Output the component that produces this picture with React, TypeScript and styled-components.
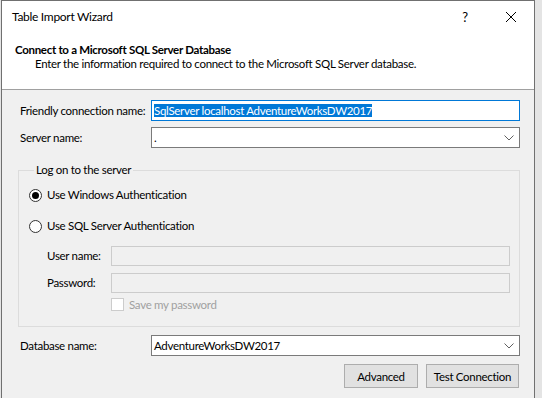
import React from 'react';
import styled, { createGlobalStyle } from 'styled-components';

const GlobalStyle = createGlobalStyle`
  html, body {
    margin: 0;
    padding: 0;
    background: #e4e4e4;
  }
  body {
    font-family: Lato, 'Liberation Sans', sans-serif;
    font-size: 11.5px;
    letter-spacing: -0.3px;
    color: #000;
  }
`;

const Window = styled.div`
  box-sizing: border-box;
  width: 534px;
  height: 398px;
  margin-left: 1px;
  border: 1px solid #707070;
  border-bottom: none;
  background: #f0f0f0;
  display: flex;
  flex-direction: column;
  white-space: nowrap;
`;

const Header = styled.div`
  background: #fff;
  height: 88px;
  border-bottom: 1px solid #a0a0a0;
`;

const TitleBar = styled.div`
  height: 32px;
  display: flex;
  align-items: center;
  padding-left: 10px;
`;

const Title = styled.div`
  flex: 1;
  line-height: 16px;
  font-size: 12px;
`;

const CaptionButton = styled.div`
  width: 46px;
  height: 32px;
  display: flex;
  align-items: center;
  justify-content: center;
  font-size: 13px;
`;

const Heading = styled.div`
  font-weight: bold;
  padding-left: 13px;
  margin-top: 9px;
  line-height: 15px;
`;

const SubHeading = styled.div`
  padding-left: 33px;
  line-height: 14px;
`;

const Body = styled.div`
  padding: 10px 14px 0 16px;
  display: flex;
  flex-direction: column;
`;

const FormRow = styled.div<{ $mt?: number }>`
  display: grid;
  grid-template-columns: 131px 1fr;
  align-items: center;
  padding-left: 2px;
  margin-top: ${p => p.$mt || 0}px;
`;

const Label = styled.div`
  line-height: 16px;
`;

const Field = styled.div<{ $focused?: boolean }>`
  box-sizing: border-box;
  height: 21px;
  background: #fff;
  border: 1px solid ${p => (p.$focused ? '#0078d7' : '#7a7a7a')};
  display: flex;
  align-items: center;
  padding-left: 2px;
  line-height: 15px;
`;

const Selection = styled.span`
  background: #0078d7;
  color: #fff;
`;

const Value = styled.span`
  flex: 1;
`;

const Chevron = styled.svg`
  margin-right: 5px;
`;

const Group = styled.fieldset`
  margin: 15px 0 0 0;
  padding: 0 9px 15px 10px;
  border: 1px solid #dcdcdc;
  display: flex;
  flex-direction: column;
`;

const Legend = styled.legend`
  margin-left: 5px;
  padding: 0 2px;
  line-height: 14px;
`;

const OptionRow = styled.div<{ $mt: number }>`
  display: flex;
  align-items: center;
  height: 16px;
  margin-top: ${p => p.$mt}px;
  line-height: 16px;
`;

const Radio = styled.span<{ $checked?: boolean }>`
  box-sizing: border-box;
  width: 13px;
  height: 13px;
  border-radius: 50%;
  border: 1px solid #333;
  background: #fff;
  margin-right: 5px;
  display: flex;
  align-items: center;
  justify-content: center;
  &::after {
    content: '';
    width: 7px;
    height: 7px;
    border-radius: 50%;
    background: ${p => (p.$checked ? '#000' : 'transparent')};
  }
`;

const CredRow = styled.div<{ $mt: number }>`
  display: grid;
  grid-template-columns: 64px 1fr;
  align-items: center;
  padding-left: 18px;
  margin-top: ${p => p.$mt}px;
`;

const DisabledField = styled.div`
  box-sizing: border-box;
  height: 20px;
  background: #f0f0f0;
  border: 1px solid #cccccc;
`;

const CheckRow = styled.div`
  display: flex;
  align-items: center;
  padding-left: 82px;
  margin-top: 5px;
  height: 13px;
  color: #a0a0a0;
`;

const Checkbox = styled.span`
  box-sizing: border-box;
  width: 13px;
  height: 13px;
  border: 1px solid #cccccc;
  background: #fff;
  margin-right: 5px;
`;

const ButtonBar = styled.div`
  display: flex;
  justify-content: flex-end;
  gap: 8px;
  margin-top: 8px;
  padding-right: 1px;
`;

const Button = styled.button<{ $w: number }>`
  box-sizing: border-box;
  width: ${p => p.$w}px;
  height: 24px;
  background: #e1e1e1;
  border: 1px solid #adadad;
  font-family: inherit;
  font-size: 11.5px;
  letter-spacing: -0.3px;
  color: #000;
  padding: 0;
`;

const ComboChevron = () => (
  <Chevron width="10" height="6" viewBox="0 0 10 6">
    <path d="M0.5 0.5 L5 5 L9.5 0.5" fill="none" stroke="#606060" strokeWidth="1" />
  </Chevron>
);

export default function App() {
  return (
    <>
      <GlobalStyle />
      <Window>
        <Header>
          <TitleBar>
            <Title>Table Import Wizard</Title>
            <CaptionButton>?</CaptionButton>
            <CaptionButton>
              <svg width="10" height="10" viewBox="0 0 10 10">
                <path d="M0 0 L10 10 M10 0 L0 10" stroke="#000" strokeWidth="1" />
              </svg>
            </CaptionButton>
          </TitleBar>
          <Heading>Connect to a Microsoft SQL Server Database</Heading>
          <SubHeading>
            Enter the information required to connect to the Microsoft SQL Server database.
          </SubHeading>
        </Header>
        <Body>
          <FormRow>
            <Label>Friendly connection name:</Label>
            <Field $focused>
              <Value>
                <Selection>SqlServer localhost AdventureWorksDW2017</Selection>
              </Value>
            </Field>
          </FormRow>
          <FormRow $mt={6}>
            <Label>Server name:</Label>
            <Field>
              <Value>.</Value>
              <ComboChevron />
            </Field>
          </FormRow>
          <Group>
            <Legend>Log on to the server</Legend>
            <OptionRow $mt={10}>
              <Radio $checked />
              Use Windows Authentication
            </OptionRow>
            <OptionRow $mt={15}>
              <Radio />
              Use SQL Server Authentication
            </OptionRow>
            <CredRow $mt={12}>
              <Label>User name:</Label>
              <DisabledField />
            </CredRow>
            <CredRow $mt={7}>
              <Label>Password:</Label>
              <DisabledField />
            </CredRow>
            <CheckRow>
              <Checkbox />
              Save my password
            </CheckRow>
          </Group>
          <FormRow $mt={8}>
            <Label>Database name:</Label>
            <Field>
              <Value>AdventureWorksDW2017</Value>
              <ComboChevron />
            </Field>
          </FormRow>
          <ButtonBar>
            <Button $w={74}>Advanced</Button>
            <Button $w={93}>Test Connection</Button>
          </ButtonBar>
        </Body>
      </Window>
    </>
  );
}
